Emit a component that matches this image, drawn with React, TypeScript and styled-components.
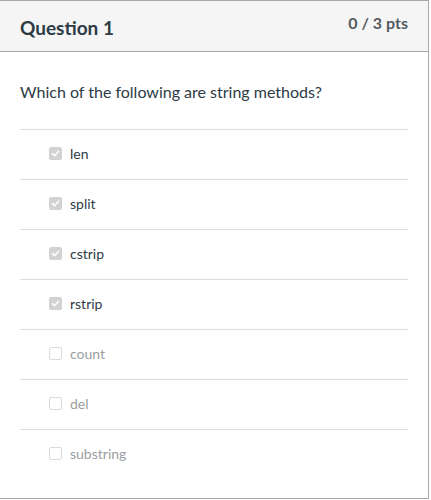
import styled, { createGlobalStyle } from 'styled-components';

const GlobalStyle = createGlobalStyle`
  body {
    margin: 0;
    background: #fff;
    font-family: Lato, "Open Sans", sans-serif;
  }
`;

const Card = styled.div`
  width: 430px;
  height: 499px;
  margin-left: -1px;
  box-sizing: border-box;
  border: 1px solid #a8a8a8;
  background: #fff;
  display: flex;
  flex-direction: column;
`;

const Header = styled.div`
  height: 51px;
  box-sizing: border-box;
  background: #f5f5f5;
  border-bottom: 1px solid #a8a8a8;
  padding: 0 20px;
  display: flex;
  justify-content: space-between;
  align-items: flex-start;
`;

const Title = styled.h2`
  margin: 0;
  font-size: 19px;
  font-weight: 700;
  color: #2d3b45;
  line-height: 54px;
`;

const Points = styled.div`
  font-size: 16px;
  font-weight: 700;
  color: #555a5e;
  line-height: 20px;
  margin-top: 12px;
`;

const Body = styled.div`
  padding: 28px 20px 0;
`;

const Prompt = styled.p`
  margin: 0 0 25px;
  font-size: 16px;
  line-height: 24px;
  color: #2d3b45;
`;

const AnswerList = styled.div`
  display: flex;
  flex-direction: column;
`;

const Answer = styled.div<{ $selected: boolean }>`
  height: 50px;
  box-sizing: border-box;
  border-top: 1px solid #dcdcdc;
  padding: 0 0 2px 29px;
  display: flex;
  align-items: center;
  gap: 8px;
  font-size: 14px;
  color: ${(p) => (p.$selected ? '#2d3b45' : '#9a9ea2')};
`;

const Box = styled.span<{ $checked: boolean }>`
  width: 13px;
  height: 13px;
  box-sizing: border-box;
  border-radius: 2px;
  border: 1px solid ${(p) => (p.$checked ? '#d2d2d2' : '#dadada')};
  background: ${(p) => (p.$checked ? '#d2d2d2' : '#fff')};
  display: flex;
  align-items: center;
  justify-content: center;
`;

const answers = [
  { label: 'len', checked: true },
  { label: 'split', checked: true },
  { label: 'cstrip', checked: true },
  { label: 'rstrip', checked: true },
  { label: 'count', checked: false },
  { label: 'del', checked: false },
  { label: 'substring', checked: false },
];

function App() {
  return (
    <>
      <GlobalStyle />
      <Card>
        <Header>
          <Title>Question 1</Title>
          <Points>0 / 3 pts</Points>
        </Header>
        <Body>
          <Prompt>Which of the following are string methods?</Prompt>
          <AnswerList>
            {answers.map((a) => (
              <Answer key={a.label} $selected={a.checked}>
                <Box $checked={a.checked}>
                  {a.checked && (
                    <svg width="9" height="9" viewBox="0 0 10 10">
                      <path d="M1.5 5.2 L4 7.5 L8.5 2.5" fill="none" stroke="#fff" strokeWidth="1.8" strokeLinecap="round" strokeLinejoin="round" />
                    </svg>
                  )}
                </Box>
                {a.label}
              </Answer>
            ))}
          </AnswerList>
        </Body>
      </Card>
    </>
  );
}

export default App;
